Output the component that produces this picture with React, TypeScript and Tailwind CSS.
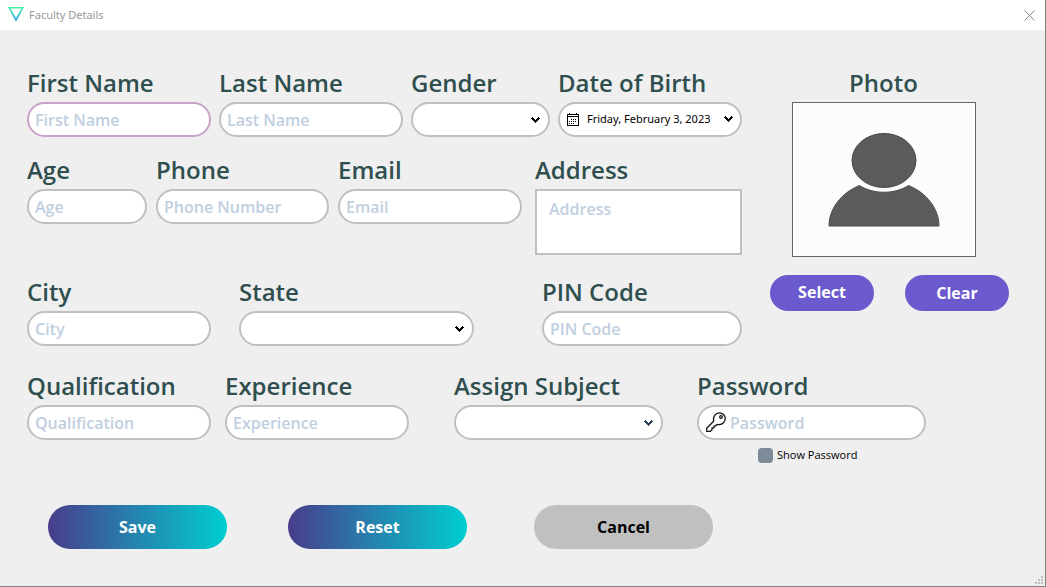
import React, { useState } from "react";

const fieldBase =
  "block h-[35px] w-full rounded-full border-2 border-[#c0c0c0] bg-white text-base font-semibold text-slate-700 outline-none placeholder:text-[#c0cfe0]";

function Chevron({ className = "" }: { className?: string }) {
  return (
    <svg viewBox="0 0 9 7" width="9" height="7" shapeRendering="crispEdges" className={className} aria-hidden="true">
      <path
        fill="currentColor"
        d="M0 1h1V0h1v1h1v1h1v1h1V2h1V1h1V0h1v1h1v1H8v1H7v1H6v1H5v1H4V5H3V4H2V3H1V2H0z"
      />
    </svg>
  );
}

function Label({ id, children }: { id: string; children: React.ReactNode }) {
  return (
    <label htmlFor={id} className="mb-[3px] block text-2xl leading-8 font-semibold whitespace-nowrap text-[#2f4f4f]">
      {children}
    </label>
  );
}

function TextField({
  id,
  label,
  placeholder = label,
  className = "",
  active = false,
}: {
  id: string;
  label: string;
  placeholder?: string;
  className?: string;
  active?: boolean;
}) {
  return (
    <div className={className}>
      <Label id={id}>{label}</Label>
      <input
        id={id}
        type="text"
        placeholder={placeholder}
        className={active ? `${fieldBase} border-[#c8a2c8]! px-1.5` : `${fieldBase} px-1.5`}
      />
    </div>
  );
}

function SelectField({
  id,
  label,
  options,
  className = "",
  arrow = "text-black",
}: {
  id: string;
  label: string;
  options: string[];
  className?: string;
  arrow?: string;
}) {
  return (
    <div className={className}>
      <Label id={id}>{label}</Label>
      <div className="relative">
        <select id={id} defaultValue="" className={`${fieldBase} appearance-none px-3`}>
          <option value=""></option>
          {options.map((o) => (
            <option key={o}>{o}</option>
          ))}
        </select>
        <Chevron className={`pointer-events-none absolute top-[15px] right-[10px] ${arrow}`} />
      </div>
    </div>
  );
}

function CalendarIcon() {
  return (
    <svg viewBox="0 0 12 14" width="12" height="14" shapeRendering="crispEdges" aria-hidden="true">
      <path
        fill="#000"
        d="M0 1h2V0h1v1h6V0h1v1h2v12H0zM1 2v1h10V2zM1 4v8h10V4z"
        fillRule="evenodd"
      />
      <path
        fill="#000"
        d="M4 6h1v1H4zM6 6h1v1H6zM8 6h1v1H8zM2 8h1v1H2zM4 8h1v1H4zM6 8h1v1H6zM8 8h1v1H8zM2 10h1v1H2zM4 10h1v1H4zM6 10h1v1H6z"
      />
    </svg>
  );
}

function KeyIcon() {
  return (
    <svg
      viewBox="0 0 20 20"
      width="20"
      height="20"
      fill="none"
      stroke="#111"
      strokeWidth="1.3"
      strokeLinejoin="round"
      aria-hidden="true"
      className="pointer-events-none absolute top-[7px] left-[9px]"
    >
      <path d="M7.6 9.2C6.6 5 9.500.8 13.500.8c3.200 0 5.800 2.600 5.800 5.800 0 3.900-4 6.900-8.300 5.900L9.700 13.800H8v2H6v2l-1.600 1.500H.7V16.200z" />
      <circle cx="15" cy="5" r="1.300" />
    </svg>
  );
}

function Avatar() {
  return (
    <svg viewBox="0 0 112 94" width="112" height="94" aria-label="No photo selected" role="img">
      <ellipse cx="56" cy="27.500" rx="32" ry="27" fill="#5a5c5b" stroke="#4a4a4a" />
      <path
        d="M31.500 52.500C45 61.500 67 61.500 80.500 52.500C99 60 111 76 111 93H1C1 76 13 60 31.500 52.500z"
        fill="#5a5c5b"
        stroke="#4a4a4a"
      />
    </svg>
  );
}

export default function App() {
  const [show, setShow] = useState(false);
  return (
    <div className="flex min-h-screen flex-col border-r border-b border-[#7f7f7f] bg-[#efefef] font-['Open_Sans','Noto_Sans',sans-serif]">
      <header className="flex h-[30px] items-center bg-white pr-2.5 pl-2">
        <svg viewBox="0 0 16 16" width="16" height="16" fill="none" aria-hidden="true">
          <defs>
            <linearGradient id="logo" x1="0" y1="0" x2="0" y2="1">
              <stop offset="0" stopColor="#3fefa0" />
              <stop offset="1" stopColor="#22a8f0" />
            </linearGradient>
          </defs>
          <path d="M1.300 .8H14.700L8 13z" stroke="url(#logo)" strokeWidth="1.600" />
        </svg>
        <h1 className="ml-[5px] flex-1 font-['Noto_Sans',sans-serif] text-[11px] text-[#999]">Faculty Details</h1>
        <button type="button" aria-label="Close" className="text-[#888]">
          <svg viewBox="0 0 11 11" width="11" height="11" stroke="currentColor" aria-hidden="true">
            <path d="M.5.5l10 10M10.500.5l-10 10" />
          </svg>
        </button>
      </header>

      <form className="flex flex-1 flex-col pt-[37px] pr-9 pl-[27px]" onSubmit={(e) => e.preventDefault()}>
        <div className="grid grid-cols-[715fr_239fr] gap-7">
          <div>
            <div className="grid grid-cols-[184fr_184fr_139fr_184fr] gap-2">
              <TextField id="first" label="First Name" active />
              <TextField id="last" label="Last Name" />
              <SelectField id="gender" label="Gender" options={["Male", "Female", "Other"]} />
              <div>
                <Label id="dob">Date of Birth</Label>
                <button
                  id="dob"
                  type="button"
                  className="flex h-[35px] w-full items-center rounded-full border-2 border-[#c0c0c0] bg-white px-[7px] text-[11px] whitespace-nowrap text-black"
                >
                  <CalendarIcon />
                  <span className="ml-2 flex-1 text-left font-['Noto_Sans',sans-serif]">Friday, February 3, 2023</span>
                  <Chevron />
                </button>
              </div>
            </div>

            <div className="mt-[17px] grid grid-cols-[120fr_173fr_188fr_207fr] gap-[9px]">
              <TextField id="age" label="Age" />
              <TextField id="phone" label="Phone" placeholder="Phone Number" />
              <TextField id="email" label="Email" className="pr-1" />
              <div>
                <Label id="address">Address</Label>
                <textarea
                  id="address"
                  placeholder="Address"
                  className="block h-[66px] w-full resize-none border-2 border-[#c0c0c0] bg-white px-3 py-1.5 text-base font-semibold text-slate-700 outline-none placeholder:text-[#c0cfe0]"
                />
              </div>
            </div>

            <div className="mt-[21px] grid grid-cols-[184fr_275fr_200fr] gap-7">
              <TextField id="city" label="City" />
              <SelectField id="state" label="State" options={["Gujarat", "Kerala", "Punjab"]} className="pr-10" />
              <TextField id="pin" label="PIN Code" />
            </div>
          </div>

          <section className="flex flex-col items-center">
            <h2 className="mb-[3px] pr-3 text-2xl leading-8 font-semibold text-[#2f4f4f]">Photo</h2>
            <div className="mr-3 flex h-[155px] w-[184px] items-center justify-center border border-[#666] bg-[#fcfcfc]">
              <Avatar />
            </div>
            <div className="mt-[18px] flex w-full justify-between">
              <button
                type="button"
                className="h-9 w-[104px] rounded-full bg-[#6a5acd] pb-0.5 text-base font-bold text-white"
              >
                Select
              </button>
              <button
                type="button"
                className="h-9 w-[104px] rounded-full bg-[#6a5acd] text-base font-bold text-white"
              >
                Clear
              </button>
            </div>
          </section>
        </div>

        <div className="mt-6 grid grid-cols-[184fr_215fr_229fr_312fr] gap-[14px]">
          <TextField id="qualification" label="Qualification" />
          <TextField id="experience" label="Experience" className="pr-[31px]" />
          <SelectField
            id="subject"
            label="Assign Subject"
            options={["Mathematics", "Physics", "Chemistry"]}
            className="pr-5"
            arrow="text-[#2f4060]"
          />
          <div className="pr-[83px]">
            <Label id="password">Password</Label>
            <div className="relative">
              <input
                id="password"
                type={show ? "text" : "password"}
                placeholder="Password"
                className={`${fieldBase} pr-3 pl-[31px]`}
              />
              <KeyIcon />
            </div>
            <label className="mt-[7px] ml-[61px] flex items-center gap-1 text-[11px] leading-4 whitespace-nowrap text-black">
              <input
                type="checkbox"
                checked={show}
                onChange={(e) => setShow(e.target.checked)}
                className="size-[15px] appearance-none rounded-sm bg-[#7d8a97] checked:bg-[#6a5acd]"
              />
              Show Password
            </label>
          </div>
        </div>

        <div className="mt-[42px] grid grid-cols-[240fr_246fr_475fr] pl-[21px] text-base font-bold">
          <button
            type="submit"
            className="h-11 w-[179px] rounded-full bg-linear-to-r/srgb from-[#483d8b] to-[#00ced1] text-white"
          >
            Save
          </button>
          <button
            type="reset"
            className="h-11 w-[179px] rounded-full bg-linear-to-r/srgb from-[#483d8b] to-[#00ced1] text-white"
          >
            Reset
          </button>
          <button type="button" className="h-11 w-[179px] rounded-full bg-[#c0c0c0] text-black">
            Cancel
          </button>
        </div>
      </form>

      <footer className="flex justify-end pr-0.5 pb-0.5">
        <svg viewBox="0 0 8 8" width="8" height="8" fill="#bfbfbf" shapeRendering="crispEdges" aria-hidden="true">
          <path d="M6 0h2v2H6zM3 3h2v2H3zM6 3h2v2H6zM0 6h2v2H0zM3 6h2v2H3zM6 6h2v2H6z" />
        </svg>
      </footer>
    </div>
  );
}
